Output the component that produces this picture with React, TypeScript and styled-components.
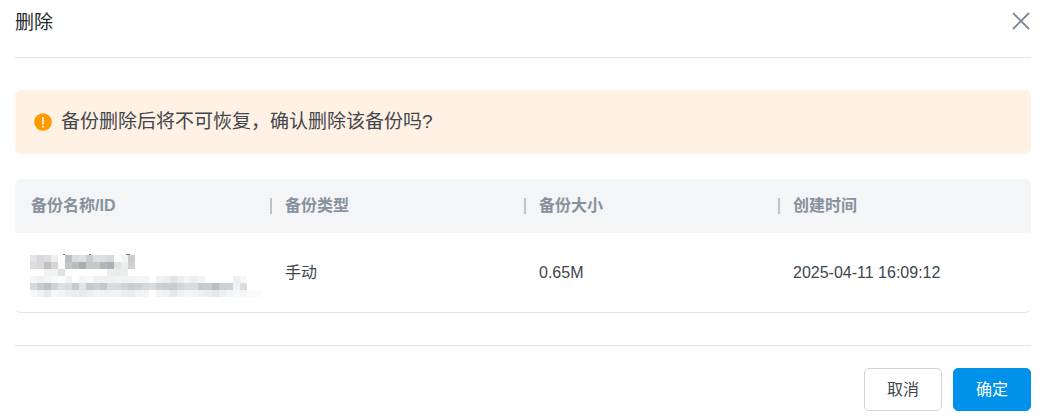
import React from "react";
import styled, { createGlobalStyle } from "styled-components";

const GlobalStyle = createGlobalStyle`
  *, *::before, *::after { box-sizing: border-box; }
  body {
    margin: 0;
    background: #fff;
    color: #40464c;
    font-family: "Liberation Sans", "Noto Sans CJK SC", sans-serif;
    font-size: 16px;
    line-height: 24px;
  }
`;

const Dialog = styled.section`
  padding: 0 20px 8px 15px;
`;

const Header = styled.header`
  display: flex;
  align-items: flex-start;
  justify-content: space-between;
  height: 58px;
  padding-top: 10px;
  border-bottom: 1px solid #e1e3e5;
`;

const Title = styled.h1`
  margin: 0;
  color: #24282c;
  font-size: 19px;
  font-weight: 400;
  line-height: 26px;
`;

const CloseButton = styled.button`
  display: flex;
  align-items: center;
  justify-content: center;
  width: 20px;
  height: 22px;
  padding: 0;
  border: 0;
  background: none;
  color: #7d8896;
  cursor: pointer;
`;

const Alert = styled.div`
  display: flex;
  align-items: center;
  gap: 9px;
  height: 64px;
  margin-top: 32px;
  padding: 0 19px;
  border-radius: 6px;
  background: #fff1e3;
  font-size: 19px;
`;

const AlertText = styled.p`
  margin: 0;
`;

const TableFrame = styled.div`
  margin-top: 25px;
  overflow: hidden;
  border-bottom: 1px solid #e1e3e5;
  border-radius: 6px;
`;

const Table = styled.table`
  width: 100%;
  table-layout: fixed;
  border-collapse: collapse;
  text-align: left;
`;

const HeadCell = styled.th<{ $divided?: boolean }>`
  height: 54px;
  padding: 0 0 0 ${(p) => (p.$divided ? 1 : 16)}px;
  background: #f3f5f7;
  color: #87919d;
  font-weight: 700;
`;

const HeadLabel = styled.span<{ $divided?: boolean }>`
  display: block;
  line-height: 16px;
  padding-left: ${(p) => (p.$divided ? 13 : 0)}px;
  border-left: ${(p) => (p.$divided ? "2px solid #bfc1c4" : "0")};
`;

const Cell = styled.td`
  height: 79px;
  padding: 0 0 0 16px;
`;

const NameCell = styled(Cell)`
  padding: 6px 0 0 15px;
`;

const Mosaic = styled.svg`
  display: block;
`;

const Footer = styled.footer`
  display: flex;
  justify-content: flex-end;
  gap: 11px;
  margin-top: 32px;
  padding-top: 22px;
  border-top: 1px solid #e1e3e5;
`;

const Button = styled.button<{ $primary?: boolean }>`
  height: 43px;
  padding: 0 22px;
  border: 1px solid ${(p) => (p.$primary ? "#0091eb" : "#d0d5da")};
  border-radius: 5px;
  background: ${(p) => (p.$primary ? "#0091eb" : "#fff")};
  color: ${(p) => (p.$primary ? "#fff" : "#40464c")};
  font: inherit;
  cursor: pointer;
`;

// Redacted name and ID: one colour per 7px block, "-" leaves a gap.
const BLOCK = 7;
const MOSAIC_ROWS = [
  "e5e5e7 d7d8da dddddf efeff0 - bbbfc3 dadcde dfe0e2 cbccd0 dfe0e2 dedfe1 d7d8db fbfbfb f3f4f4 cacccf",
  "dddddf d9dadc c0c1c4 d3d5d7 fafafa c2c6ca b9bdc1 a9adb1 c5c7ca c5c8cb b3b6ba adb1b5 e0e2e4 eceded ced0d2",
  "- - f1f2f2 f1f2f2 dfe2e4 - - - - - - ededee e9ebec ebecee",
  "f4f5f7 eff1f3 f3f5f6 f7f8f9 fbfcfc f2f3f5 fdfdfd f5f6f7 f8f9fa eef0f2 eef1f3 eef1f3 f1f3f5 eff2f4 f0f2f4 f3f5f6 f3f4f6 - eff1f3 eceff1 e1e5e8 ebedf0 f4f5f7 eceff1 f1f3f4 - - - - eef0f2 f5f6f7",
  "d5d9dd c7ccd1 bbc1c7 cdd2d6 dce0e3 d9dde1 c5cad0 e1e5e8 c3c9cf cbd0d5 c0c6cc d7dce0 d7dbdf cfd4d9 c9ced3 ccd1d5 d3d8dc d9dde1 cbd0d4 c9ced2 c7ccd1 d1d6da d8dce0 d7dce0 c4cad0 c8cdd2 b7bfc6 cbd0d5 cdd2d6 f0f2f4 d9dde1",
  "f6f8f9 eff1f4 e6e9ec f5f6f8 f1f3f5 eceff1 eceff1 e7eaed eceff1 f2f4f6 eff1f3 f0f2f4 f0f2f4 ebedf0 eaedf0 f1f3f5 f2f4f6 - f1f3f5 eef0f2 e5e8eb eef1f3 f5f6f8 f2f4f6 eef0f2 ebeef0 e4e8eb edeff2 f3f5f6 f7f8f9 f3f5f6 fbfbfc fbfbfc",
].map((row) => row.split(" "));

function RedactedName() {
  return (
    <Mosaic width="231" height="43" viewBox="0 0 231 43" shapeRendering="crispEdges" aria-hidden="true">
      <path d="M33 .5h2M59 .5h2M96 .5h4" stroke="#73777b" />
      {MOSAIC_ROWS.map((row, y) =>
        row.map((fill, x) =>
          fill === "-" ? null : (
            <rect key={`${x}-${y}`} x={x * BLOCK} y={y * BLOCK + 1} width={BLOCK} height={BLOCK} fill={`#${fill}`} />
          )
        )
      )}
    </Mosaic>
  );
}

const COLUMNS = ["备份名称/ID", "备份类型", "备份大小", "创建时间"];

export default function App() {
  return (
    <>
      <GlobalStyle />
      <Dialog role="dialog" aria-labelledby="dialog-title">
        <Header>
          <Title id="dialog-title">删除</Title>
          <CloseButton type="button" aria-label="关闭">
            <svg width="18" height="18" viewBox="0 0 18 18" fill="none" stroke="currentColor" strokeWidth="1.8">
              <path d="M1 1l16 16M17 1L1 17" />
            </svg>
          </CloseButton>
        </Header>

        <Alert role="alert">
          <svg width="18" height="18" viewBox="0 0 18 18" aria-hidden="true">
            <circle cx="9" cy="9" r="8.8" fill="#ff9900" />
            <path d="M9 4v7.5M9 12.8v1.6" stroke="#fff1e3" strokeWidth="1.7" />
          </svg>
          <AlertText>备份删除后将不可恢复，确认删除该备份吗?</AlertText>
        </Alert>

        <TableFrame>
          <Table>
            <thead>
              <tr>
                {COLUMNS.map((label, i) => (
                  <HeadCell key={label} scope="col" $divided={i > 0}>
                    <HeadLabel $divided={i > 0}>{label}</HeadLabel>
                  </HeadCell>
                ))}
              </tr>
            </thead>
            <tbody>
              <tr>
                <NameCell>
                  <RedactedName />
                </NameCell>
                <Cell>手动</Cell>
                <Cell>0.65M</Cell>
                <Cell>2025-04-11 16:09:12</Cell>
              </tr>
            </tbody>
          </Table>
        </TableFrame>

        <Footer>
          <Button type="button">取消</Button>
          <Button type="button" $primary>
            确定
          </Button>
        </Footer>
      </Dialog>
    </>
  );
}
